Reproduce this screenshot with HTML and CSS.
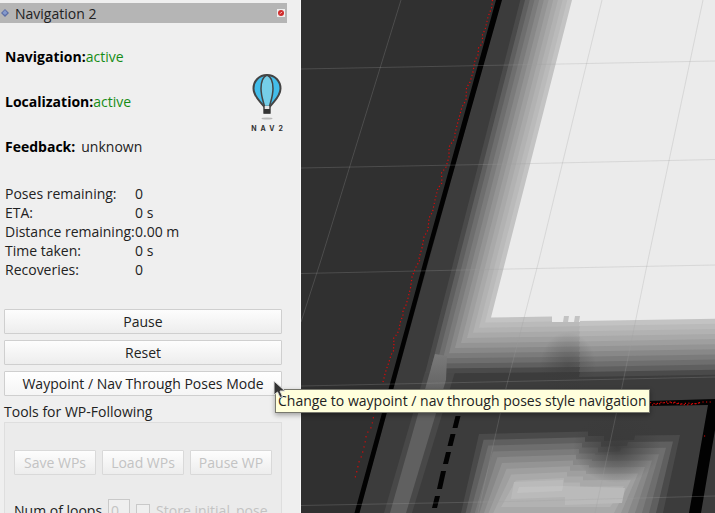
FILE: index.html
```html
<!DOCTYPE html>
<html lang="en">
<head>
<meta charset="utf-8">
<title>Navigation 2</title>
<link rel="stylesheet" href="styles.css">
</head>
<body>
<main class="app">
  <aside class="panel">
    <header class="titlebar">
      <svg class="diamond" viewBox="0 0 8 8" aria-hidden="true"><path d="M4 0 8 4 4 8 0 4Z" fill="#5b6da5"/><path d="M4 1 6.400 4 4 6 1.400 4Z" fill="#8499cc"/></svg>
      <h1>Navigation 2</h1>
      <button class="close" aria-label="Close"><svg viewBox="0 0 8 8" aria-hidden="true"><circle cx="4" cy="4" r="3" fill="#cf2a2a"/><path d="M2.7 4.8 5.2 3" stroke="#f3b5b5"/></svg></button>
    </header>
    <section class="status">
      <dl class="states">
        <div><dt>Navigation:</dt><dd class="ok">active</dd></div>
        <div><dt>Localization:</dt><dd class="ok">active</dd></div>
        <div class="feedback"><dt>Feedback:</dt><dd>unknown</dd></div>
      </dl>
      <div class="brand">
        <svg viewBox="0 0 30 46" aria-hidden="true">
          <ellipse cx="15" cy="44.500" rx="5.500" ry="1" fill="#b9b9b9"/>
          <path d="M15 1C7 1 1.500 7 1.500 14.500c0 8 6.500 12.500 10.500 18h6c4-5.500 10.500-10 10.500-18C28.500 7 23 1 15 1Z" fill="#42bdea" stroke="#444" stroke-width="2"/>
          <path d="M15 1c-4.500 2-6 8-6 13.500C9 22 11.500 28 12.500 32.500h5C18.500 28 21 22 21 14.500 21 9 19.500 3 15 1Z" fill="#75cee8" stroke="#444" stroke-width="1.500"/>
          <path d="M12 32v7h6v-7" fill="#e5e5e5" stroke="#444" stroke-width="1.500"/><path d="M12 35h6v4.500h-6z" fill="#333"/>
        </svg>
        <span>NAV2</span>
      </div>
    </section>
    <table class="metrics">
      <tr><th scope="row">Poses remaining:</th><td>0</td></tr>
      <tr><th scope="row">ETA:</th><td>0 s</td></tr>
      <tr><th scope="row">Distance remaining:</th><td>0.00 m</td></tr>
      <tr><th scope="row">Time taken:</th><td>0 s</td></tr>
      <tr><th scope="row">Recoveries:</th><td>0</td></tr>
    </table>
    <div class="actions">
      <button>Pause</button>
      <button>Reset</button>
      <div class="hovered">
        <button aria-describedby="tip">Waypoint / Nav Through Poses Mode</button>
        <div class="tooltip" id="tip" role="tooltip">Change to waypoint / nav through poses style navigation</div>
        <svg class="cursor" viewBox="0 0 13 19" aria-hidden="true"><path d="M1 1v14l3.500-3 2.500 5.500 2.500-1-2.500-5.500h5Z" fill="#333" stroke="#ddd" stroke-width="1"/></svg>
      </div>
    </div>
    <h2>Tools for WP-Following</h2>
    <section class="tools">
      <div class="trio">
        <button disabled>Save WPs</button>
        <button disabled>Load WPs</button>
        <button disabled>Pause WP</button>
      </div>
      <div class="loops">
        <label for="loops">Num of loops</label>
        <input id="loops" type="text" value="0" disabled>
        <input id="store" type="checkbox" disabled>
        <label class="off" for="store">Store initial_pose</label>
      </div>
    </section>
  </aside>
  <section class="scene" aria-label="Map view">
    <svg viewBox="301 0 414 513" preserveAspectRatio="xMinYMin slice" role="img" aria-label="Costmap with laser scan">
      <defs>
        <linearGradient id="strip" gradientUnits="userSpaceOnUse" x1="0" y1="352" x2="0" y2="395"><stop stop-color="#7b7b7b"/><stop offset="1" stop-color="#606060"/></linearGradient>
        <radialGradient id="dip"><stop stop-color="#3a3a3a" stop-opacity=".85"/><stop offset=".4" stop-color="#3a3a3a" stop-opacity=".5"/><stop offset="1" stop-color="#3a3a3a" stop-opacity="0"/></radialGradient>
        <radialGradient id="shade"><stop stop-color="#3a3a3a" stop-opacity=".4"/><stop offset="1" stop-color="#3a3a3a" stop-opacity="0"/></radialGradient>
      </defs>
      <rect x="301" width="414" height="513" fill="#303030"/>
      <path d="M501 0H715V513H359Z" fill="#3c3c3c"/>
      <path d="M496 0h6L428.500 260 359.500 513h-5L424 260Z" fill="#020202"/>
      <path d="M425 372h30L412 513H384Z" fill="#484848"/>
      <g id="hall"></g>
      <path d="M435 354 447 356 446 380 406 513H390Z" fill="url(#strip)"/>
      <path d="M552 314h28v8h-28Z" fill="#ebebeb"/>
      <path d="M564 316h5l-1 6h-5ZM575 316h5l-1 6h-5Z" fill="#c3c3c3"/>
      <ellipse cx="568" cy="366" rx="28" ry="34" fill="url(#shade)"/>
      <g id="room"></g>
      <ellipse cx="617" cy="447" rx="44" ry="36" fill="url(#dip)"/>
      <path d="M648 401 715 399V430L701 513H689L708 405 648 406Z" fill="#020202"/>
      <path d="M455.500 416h5l-3 12h-5ZM450.500 434h5l-3 12h-5ZM446 452h5l-3 12h-5ZM441 471h5l-4 18h-5ZM435 496h5l-3 12h-5Z" fill="#020202"/>
      <g fill="none" stroke="#a0a0a0" stroke-opacity=".26">
        <path d="M301 69 510 65 715 61M301 168 510 164 715 159.500M301 273.500 510 269 715 265M301 386 510 381.500 715 377M301 505.500 510 501.500 715 496"/>
        <path d="M401 0 321 260 301 322M602 0 539 260 506 388 478 513M703 0 648 260 622 387 595 513"/>
      </g>
      <g fill="none" stroke="#e00808" stroke-width="1.200" stroke-dasharray="1.200 2.400">
        <path d="M492.500 0 491.500 8 488 17 485 30 482.500 34 482.500 43 478.500 48 478 55 475 60 473 72 470 82 466.500 88 466 100 462 107 459 118 455 133 455 138 449 147 449 157 446 167 441.500 173 442 183 438 188 435 200 432.500 212 429 218 428 230 424 237 422 248 419 258 420.500 259 415.500 268 412 277 410.500 288 408 298 406 305 403 310 403 315 400 323 399 330 397 334 393 339 394.500 343 393 347 394.500 349 391 355 389 362 385.500 372 383 382"/>
        <path d="M374 412 373.500 417 371.500 427 366.500 434 365 443 362 455 359 462 356.500 473 354.500 480" stroke-dasharray="1.200 4"/>
        <path d="M650 402.500 656 404 662 402 668 403.500 674 402 681 404 688 403 695 404 702 402 711 402M652 405 661 403.500 668 401.500 676 403.500 687 405 699 403"/>
        <path d="M704 436h2"/>
      </g>
    </svg>
  </section>
</main>
<script src="map.js"></script>
</body>
</html>
```

FILE: map.js
```js
const NS = "http://www.w3.org/2000/svg";
const shades = ["#4a4a4a", "#5f5f5f", "#6e6e6e", "#7b7b7b", "#888888", "#949494", "#9f9f9f", "#a9a9a9", "#b2b2b2", "#bababa", "#c3c3c3"];

function polygon(parent, points, fill) {
  const p = document.createElementNS(NS, "polygon");
  p.setAttribute("points", points.map(q => q.join(",")).join(" "));
  p.setAttribute("fill", fill);
  document.getElementById(parent).append(p);
}

// Inflation layers around the bright hall, widest first.
for (let k = 11; k >= 0; k--) {
  const y = 317.5 + 5.1 * k;
  polygon("hall", [
    [572 - 4.7 * k, 0],
    [491 - 6 * k, y],
    [580, y - 1.5],
    [579, y + 3.5],
    [715, y + 1.2],
    [715, 0]
  ], k === 0 ? "#ebebeb" : shades[11 - k]);
}

// Inflation layers of the lower room, from its walls inwards.
for (let k = 0; k < 9; k++) {
  const l = 479 + 4.6 * k, r = 680 - 7 * k, y = 434 + 5.8 * k;
  const mid = 588 - 3 * k;
  const right = y + 1 + 0.6 * k;
  const bottom = Math.min(513, 513 + (7 - k) * 6);
  const rise = 513 - y;
  const t = (bottom - y) / rise;
  const dip = k < 3
    ? [[mid + 16, y + 7], [r - 46, y + 6], [r - 45, right + 0.5]]
    : [[mid + 16, right + 0.5]];
  polygon("room", [
    [l, y], [mid, y - 2.5], [mid, y + 2], [mid + 16, y + 2],
    ...dip,
    [r, right],
    [r - 17 * t, bottom], [l - 18 * t, bottom]
  ], shades[k]);
}
polygon("room", [[514, 482], [563, 480], [563, 486], [625, 488], [622, 503], [565, 505], [565, 497], [511, 499]], "#bababa");
polygon("room", [[519, 487], [563, 486], [562, 491], [517, 493]], "#c1c1c1");
```

FILE: styles.css
```css
* { box-sizing: border-box; }
body {
  margin: 0;
  overflow: hidden;
  background: #efefef;
  color: #222;
  font: 14px/19px "Open Sans", "Noto Sans", sans-serif;
}
.app {
  display: grid;
  grid-template-columns: minmax(301px, 42%) 1fr;
  grid-template-rows: 100vh;
}
.panel { padding: 3px 13px 0 0; min-width: 0; border-right: 1px solid #f8f8f8; }
.scene { min-width: 0; overflow: hidden; background: #303030; }
.scene svg { display: block; width: 100%; height: 100%; }
h1, h2 { margin: 0; font: inherit; }
button, input { font: inherit; color: inherit; margin: 0; }
.titlebar {
  display: flex;
  align-items: center;
  gap: 6px;
  height: 20px;
  padding: 0 2px 0 1px;
  background: #b5b5b5;
}
.diamond { width: 8px; height: 8px; }
.close { display: flex; width: 8px; height: 8px; margin-left: auto; padding: 0; border: 0; background: #eee; }
.close svg { width: 8px; height: 8px; }
.status { display: flex; justify-content: space-between; padding: 24px 3px 0 5px; }
.states { display: grid; gap: 26px; margin: 0; }
.states div { display: flex; gap: 0; }
.states .feedback { gap: 6px; }
.states dt { font-weight: 700; color: #000; }
.states dd { margin: 0; }
.states .ok { color: #168c16; }
.brand { display: flex; flex-direction: column; align-items: center; gap: 5px; padding-top: 27px; width: 34px; }
.brand svg { width: 30px; height: 46px; }
.brand span { font: 700 7px/8px Inter, sans-serif; letter-spacing: 4px; margin-right: -4px; color: #333; }
.metrics { margin: 28px 0 30px 5px; border-collapse: collapse; }
.metrics th, .metrics td { padding: 0; text-align: left; font-weight: 400; }
.metrics th { width: 130px; white-space: nowrap; }
.actions { display: grid; gap: 6px; padding: 0 5px 0 4px; }
.actions button, .trio button {
  width: 100%;
  height: 25px;
  padding: 0;
  border: 1px solid #cfcfcf;
  border-radius: 1px;
  background: linear-gradient(#fdfdfd, #ededed);
  white-space: nowrap;
}
.hovered { position: relative; }
.actions .hovered button { display: block; background: linear-gradient(#fff, #f5f5f5); }
.tooltip {
  position: absolute;
  z-index: 1;
  top: 18px;
  left: 271px;
  padding: 1px 2px;
  border: 1px solid #77776d;
  background: #ffffdc;
  box-shadow: 0 2px 5px #0005;
  line-height: 20px;
  white-space: nowrap;
}
.cursor { position: absolute; z-index: 2; top: 9px; left: 269px; width: 13px; height: 19px; }
h2 { margin: 6px 4px 1px; }
.tools { margin: 0 5px 0 4px; padding: 27px 9px; border: 1px solid #dedede; background: #ebebeb; }
.trio { display: grid; grid-template-columns: repeat(3, 1fr); gap: 6px; }
.trio button { border-color: #d9d9d9; color: #c3c3c3; }
.loops { display: flex; align-items: center; gap: 6px; margin-top: 24px; white-space: nowrap; }
.loops .off, .loops input { color: #c3c3c3; }
.loops input { appearance: none; border: 1px solid #c9c9c9; background: #efefef; }
.loops input[type="text"] { width: 22px; height: 23px; padding: 0 2px; }
.loops input[type="checkbox"] { width: 14px; height: 14px; flex: none; }
```
